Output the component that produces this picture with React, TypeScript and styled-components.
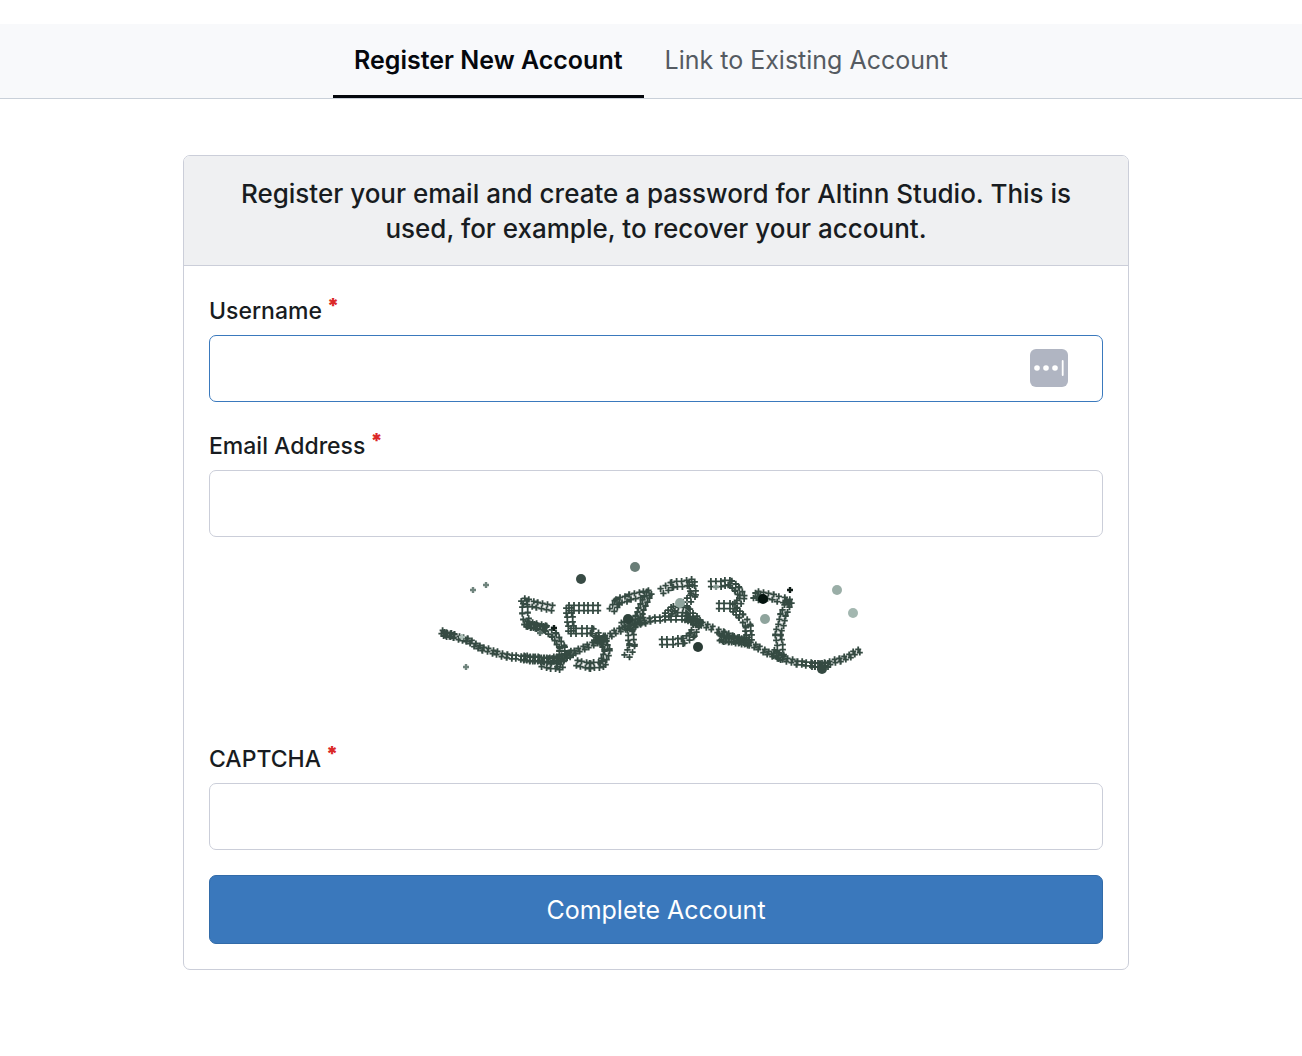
import React from 'react';
import styled, { createGlobalStyle } from 'styled-components';

const GlobalStyle = createGlobalStyle`
  *, *::before, *::after { box-sizing: border-box; }
  body {
    margin: 0;
    background: #fff;
    color: #181c21;
    font-family: Inter, "Liberation Sans", sans-serif;
  }
`;

const Tabs = styled.nav`
  display: flex;
  justify-content: center;
  margin-top: 24px;
  background: #f8f9fb;
  border-bottom: 1px solid #c9d0d9;
`;

const Tab = styled.a<{ $active?: boolean }>`
  padding: 18px 21px 17px;
  border-bottom: 3px solid ${p => (p.$active ? '#05080d' : 'transparent')};
  color: ${p => (p.$active ? '#05080d' : '#555b62')};
  font-size: 25px;
  font-weight: ${p => (p.$active ? 600 : 400)};
  line-height: 36px;
  text-decoration: none;
`;

const Main = styled.main`
  display: flex;
  justify-content: center;
  padding: 56px 10px 56px 20px;
`;

const Card = styled.section`
  width: 100%;
  max-width: 946px;
  border: 1px solid #cbced9;
  border-radius: 7px;
  overflow: hidden;
`;

const Heading = styled.h1`
  margin: 0;
  padding: 20px 45px 19px;
  background: #eff0f2;
  border-bottom: 1px solid #cbced9;
  font-size: 26px;
  font-weight: 500;
  line-height: 35px;
  text-align: center;
`;

const Form = styled.form`
  display: flex;
  flex-direction: column;
  gap: 25px;
  padding: 26px 25px 25px;
`;

const Field = styled.div`
  display: flex;
  flex-direction: column;
  gap: 5px;
`;

const Label = styled.label`
  display: flex;
  gap: 5px;
  font-size: 23px;
  font-weight: 500;
  line-height: 38px;
`;

const Required = styled.span`
  color: #db2828;
  font-size: 20px;
  font-weight: 900;
  line-height: 28px;
`;

const InputBox = styled.div<{ $active?: boolean }>`
  display: flex;
  align-items: center;
  height: 67px;
  padding-right: 34px;
  border: 1px solid ${p => (p.$active ? '#3a79bd' : '#cbced9')};
  border-radius: 7px;
  background: #fff;
`;

const Input = styled.input`
  flex: 1;
  min-width: 0;
  height: 100%;
  padding: 0 22px;
  border: 0;
  outline: 0;
  background: transparent;
  color: inherit;
  font: inherit;
  font-size: 23px;
`;

const FillButton = styled.button`
  display: flex;
  padding: 0 0 2px;
  border: 0;
  background: transparent;
`;

const CaptchaFrame = styled.div`
  display: flex;
  justify-content: center;
  padding-bottom: 9px;
`;

const CaptchaImage = styled.svg`
  overflow: visible;
`;

const Submit = styled.button`
  height: 69px;
  border: 1px solid #326ba8;
  border-radius: 7px;
  background: #3a78bc;
  color: #fff;
  font: inherit;
  font-size: 25px;
`;

type Point = [number, number];

const WAVE: Point[] = [
  [2, 70], [10, 73], [27, 78], [43, 87], [67, 94], [90, 97], [113, 98], [130, 92], [157, 80],
  [180, 68], [210, 58], [225, 56], [247, 56], [267, 64], [283, 71], [310, 82], [333, 93],
  [357, 101], [380, 103], [400, 98], [419, 89],
];

const STROKES: Point[][] = [
  [[112, 46], [97, 43], [84, 39], [85, 51], [87, 62], [105, 66], [114, 73], [122, 85], [122, 93], [120, 105], [102, 102]],
  [[158, 46], [129, 46], [131, 69], [152, 69], [162, 76], [167, 88], [163, 102], [150, 104], [137, 101]],
  [[172, 48], [177, 40], [190, 35], [209, 31], [203, 43], [198, 55], [190, 68], [192, 83], [187, 94]],
  [[222, 29], [232, 23], [252, 20], [253, 33], [245, 42]],
  [[227, 53], [233, 47], [248, 49], [258, 60], [252, 73], [243, 79], [222, 80]],
  [[271, 22], [290, 21], [297, 27], [302, 35], [295, 44], [279, 44]],
  [[295, 48], [301, 54], [308, 64], [309, 78], [284, 77], [282, 71]],
  [[316, 37], [318, 32], [333, 35], [349, 40], [343, 53], [338, 73], [341, 93]],
];

const DOTS: [number, number, number, string][] = [
  [141, 17, 5, '#384b45'], [195, 5, 5, '#697d77'], [188, 57, 5, '#2f433c'],
  [240, 41, 5, '#91a69f'], [323, 37, 5, '#04140f'], [325, 57, 5, '#8fa49d'],
  [397, 28, 5, '#9aaea7'], [413, 51, 5, '#a3b7b0'], [258, 85, 5, '#2a3b35'],
  [382, 107, 5, '#354a42'],
];

const SPECKS: [number, number, string][] = [
  [33, 28, '#6f847d'], [46, 23, '#6f847d'], [26, 105, '#6f847d'], [22, 75, '#aec0b9'],
  [114, 66, '#101d18'], [350, 28, '#101d18'], [100, 71, '#5b7068'], [276, 25, '#82968f'],
];

const plus = (x: number, y: number, r: number) =>
  `M${(x - r).toFixed(1)} ${y.toFixed(1)}h${2 * r}M${x.toFixed(1)} ${(y - r).toFixed(1)}v${2 * r}`;

/* Stamps two rows of small crosses along a polyline, as the captcha noise brush does. */
function brush(points: Point[], step: number, spread: number, r: number) {
  let d = '';
  for (let i = 1; i < points.length; i++) {
    const [ax, ay] = points[i - 1];
    const [bx, by] = points[i];
    const dx = bx - ax;
    const dy = by - ay;
    const length = Math.hypot(dx, dy);
    const count = Math.max(1, Math.round(length / step));
    const nx = (-dy / length) * spread;
    const ny = (dx / length) * spread;
    for (let k = 0; k <= count; k++) {
      const x = Math.round(ax + (dx * k) / count);
      const y = Math.round(ay + (dy * k) / count);
      d += plus(x + nx, y + ny, r) + plus(x - nx, y - ny, r);
    }
  }
  return d;
}

function Captcha() {
  return (
    <CaptchaImage width="432" height="144" viewBox="0 0 432 144" role="img" aria-label="Captcha">
      <g fill="none" stroke="#354a42" strokeWidth="1.8">
        {STROKES.map((s, i) => <path key={i} d={brush(s, 5, 2.7, 3.2)} />)}
        <path d={brush(WAVE, 5, 1.8, 3)} />
        <path d={brush([[4, 72], [14, 74]], 3, 2, 3)} />
        <path d={brush([[84, 96], [104, 98], [120, 97], [132, 91]], 3, 2.5, 3)} />
        <path d={brush([[155, 76], [164, 80]], 3, 2.5, 3)} />
        <path d={brush([[182, 63], [204, 58]], 3, 2.5, 3)} />
        <path d={brush([[88, 63], [106, 67]], 3, 2, 3)} />
        <path d={brush([[246, 56], [260, 62]], 3, 2.5, 3)} />
        <path d={brush([[280, 76], [308, 81]], 3, 2.5, 3)} />
        <path d={brush([[333, 90], [342, 96]], 3, 2.5, 3)} />
        <path d={brush([[372, 103], [388, 103]], 3, 2, 3)} />
      </g>
      {SPECKS.map(([x, y, c], i) => <path key={i} d={plus(x, y, 3)} stroke={c} strokeWidth="2.4" />)}
      {DOTS.map(([x, y, r, c], i) => <circle key={i} cx={x} cy={y} r={r} fill={c} />)}
    </CaptchaImage>
  );
}

function FillIcon() {
  return (
    <svg width="38" height="38" viewBox="0 0 38 38" aria-hidden="true">
      <rect width="38" height="38" rx="6" fill="#b0b5c2" />
      <circle cx="7" cy="19" r="2.8" fill="#fff" />
      <circle cx="16" cy="19" r="2.8" fill="#fff" />
      <circle cx="25" cy="19" r="2.8" fill="#fff" />
      <path d="M32.7 12v14" stroke="#fff" strokeWidth="1.8" strokeLinecap="round" />
    </svg>
  );
}

function TextField({ id, label, type = 'text', active, children }: {
  id: string; label: string; type?: string; active?: boolean; children?: React.ReactNode;
}) {
  return (
    <Field>
      <Label htmlFor={id}>{label}<Required>*</Required></Label>
      <InputBox $active={active}>
        <Input id={id} name={id} type={type} required />
        {children}
      </InputBox>
    </Field>
  );
}

export default function App() {
  return (
    <>
      <GlobalStyle />
      <Tabs>
        <Tab href="#register" $active aria-current="page">Register New Account</Tab>
        <Tab href="#link">Link to Existing Account</Tab>
      </Tabs>
      <Main>
        <Card>
          <Heading>
            Register your email and create a password for Altinn Studio. This is used, for example, to recover your account.
          </Heading>
          <Form onSubmit={e => e.preventDefault()}>
            <TextField id="username" label="Username" active>
              <FillButton type="button" aria-label="Fill in username"><FillIcon /></FillButton>
            </TextField>
            <TextField id="email" label="Email Address" type="email" />
            <CaptchaFrame><Captcha /></CaptchaFrame>
            <TextField id="captcha" label="CAPTCHA" />
            <Submit type="submit">Complete Account</Submit>
          </Form>
        </Card>
      </Main>
    </>
  );
}
